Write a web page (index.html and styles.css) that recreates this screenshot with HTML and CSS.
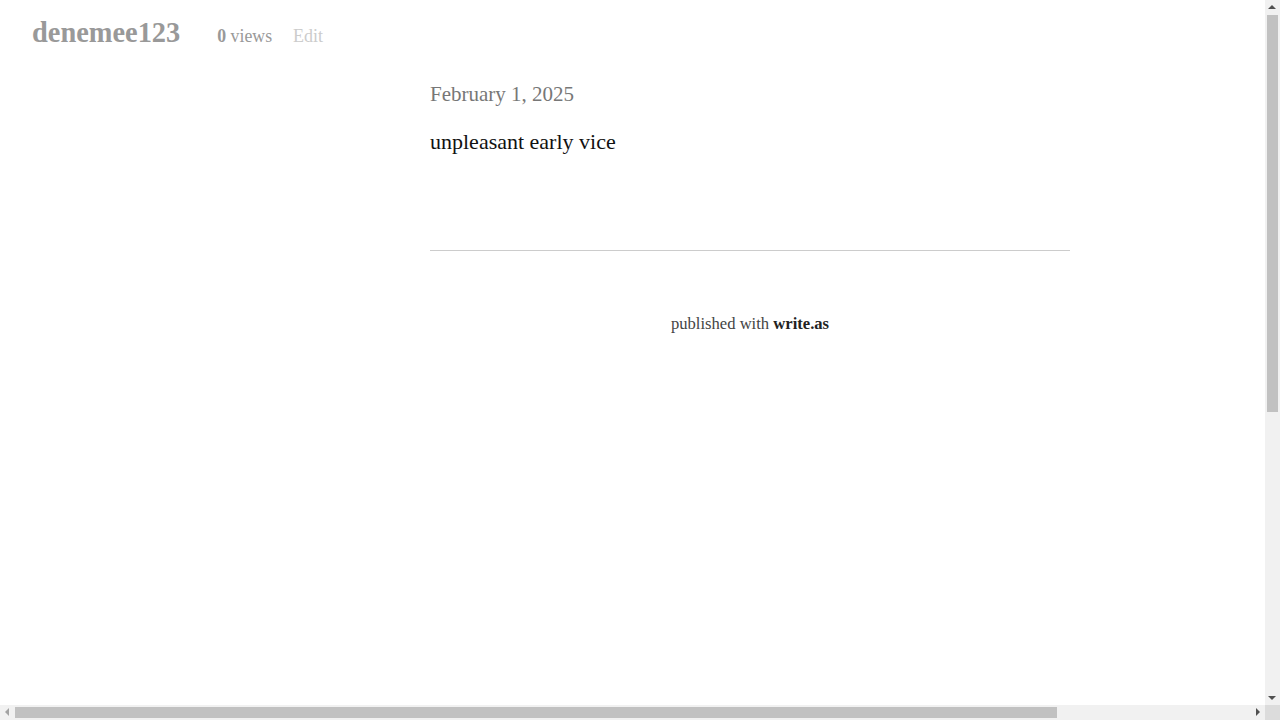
FILE: index.html
```html
<!DOCTYPE html>
<html>
<head>
<meta charset="utf-8">
<link rel="stylesheet" href="styles.css">
</head>
<body>
<div class="page">
  <nav class="topbar">
    <h1 class="blog-title">denemee123</h1>
    <span class="views"><strong>0</strong> views</span>
    <a class="edit" href="#">Edit</a>
  </nav>
  <main class="column">
    <article class="post">
      <time class="date">February 1, 2025</time>
      <div class="content">
        <p>unpleasant early vice</p>
      </div>
    </article>
    <hr class="rule">
    <footer class="footer">
      <p>published with <a href="#">write.as</a></p>
    </footer>
  </main>
</div>
<div class="vscroll">
  <div class="arrow-up"></div>
  <div class="vthumb"></div>
  <div class="arrow-down"></div>
</div>
<div class="hscroll">
  <div class="arrow-left"></div>
  <div class="hthumb"></div>
  <div class="arrow-right"></div>
</div>
<div class="corner"></div>
</body>
</html>
```
FILE: styles.css
```css
html, body {
  margin: 0;
  padding: 0;
  background: #fff;
  overflow: hidden;
}
body {
  font-family: "Liberation Serif", "DejaVu Serif", serif;
}
.page {
  width: 1265px;
  height: 705px;
  overflow: hidden;
}
.topbar {
  display: flex;
  align-items: baseline;
  padding: 16px 32px 0;
  height: 42px;
}
.blog-title {
  margin: 0;
  font-size: 28.4px;
  font-weight: bold;
  color: #999;
  margin-right: 37px;
  line-height: 34px;
}
.views {
  font-size: 17.8px;
  color: #999;
  margin-right: 21px;
}
.views strong {
  font-weight: bold;
}
.edit {
  font-size: 18px;
  color: #ccc;
  text-decoration: none;
}
.column {
  width: 640px;
  margin: 22px 0 0 430px;
}
.date {
  display: block;
  font-size: 21px;
  color: #777;
  line-height: 28px;
}
.content p {
  margin: 20px 0 0;
  font-size: 22px;
  color: #111;
  line-height: 28px;
}
.rule {
  margin: 94px 0 0;
  border: 0;
  border-top: 1px solid #ccc;
  height: 0;
}
.footer {
  text-align: center;
  margin-top: 63px;
}
.footer p {
  margin: 0;
  font-size: 16.6px;
  color: #444;
}
.footer a {
  color: #222;
  font-weight: bold;
  text-decoration: none;
}

/* drawn scrollbars */
.vscroll {
  position: fixed;
  top: 0;
  right: 0;
  width: 15px;
  height: 705px;
  background: #f1f1f1;
}
.vthumb {
  position: absolute;
  left: 2px;
  top: 15px;
  width: 11px;
  height: 397px;
  background: #c1c1c1;
}
.arrow-up {
  position: absolute;
  left: 3px;
  top: 5px;
  width: 0;
  height: 0;
  border-left: 4px solid transparent;
  border-right: 4px solid transparent;
  border-bottom: 4px solid #505050;
}
.arrow-down {
  position: absolute;
  left: 3px;
  bottom: 5px;
  width: 0;
  height: 0;
  border-left: 4px solid transparent;
  border-right: 4px solid transparent;
  border-top: 4px solid #505050;
}
.hscroll {
  position: fixed;
  left: 0;
  bottom: 0;
  width: 1265px;
  height: 15px;
  background: #f1f1f1;
}
.hthumb {
  position: absolute;
  left: 15px;
  top: 2px;
  width: 1042px;
  height: 11px;
  background: #c1c1c1;
}
.arrow-left {
  position: absolute;
  left: 5px;
  top: 3px;
  width: 0;
  height: 0;
  border-top: 4px solid transparent;
  border-bottom: 4px solid transparent;
  border-right: 4px solid #a3a3a3;
}
.arrow-right {
  position: absolute;
  right: 5px;
  top: 3px;
  width: 0;
  height: 0;
  border-top: 4px solid transparent;
  border-bottom: 4px solid transparent;
  border-left: 4px solid #505050;
}
.corner {
  position: fixed;
  right: 0;
  bottom: 0;
  width: 15px;
  height: 15px;
  background: #dcdcdc;
}
```
